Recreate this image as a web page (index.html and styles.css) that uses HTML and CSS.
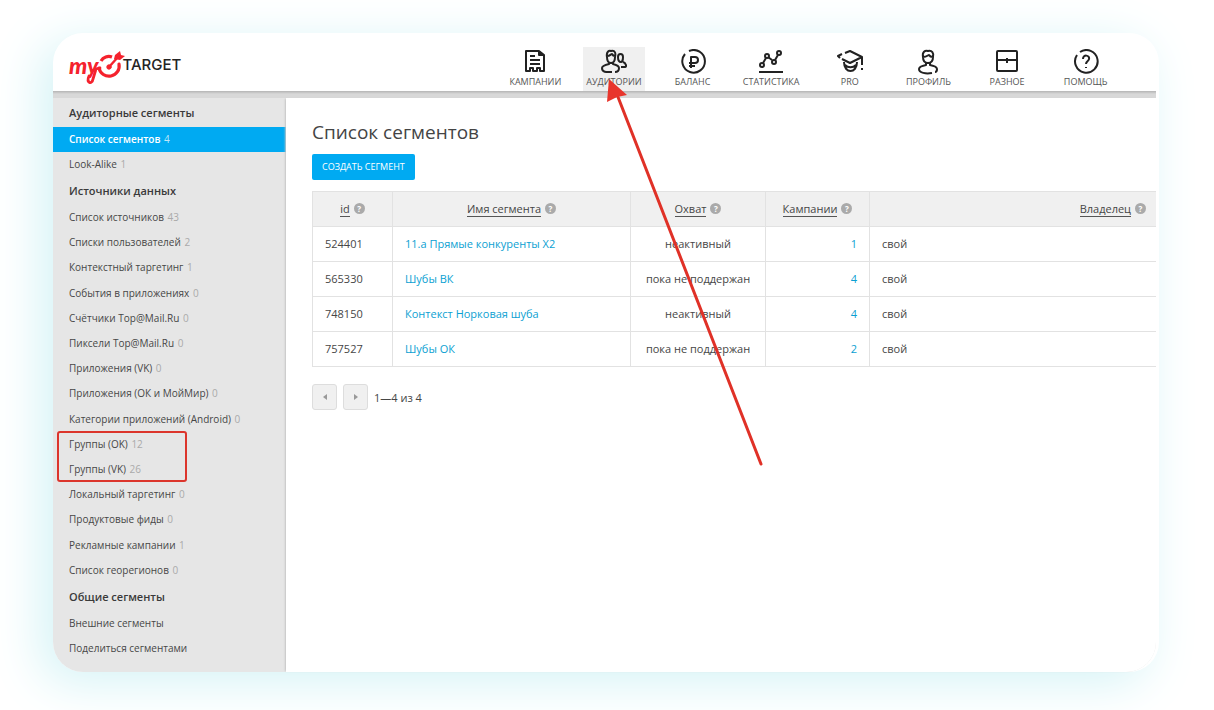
FILE: index.html
```html
<!DOCTYPE html>
<html lang="ru">
<head>
<meta charset="utf-8">
<title>myTarget — Список сегментов</title>
<meta name="viewport" content="width=device-width, initial-scale=1">
<link rel="stylesheet" href="styles.css">
</head>
<body>
<div class="card">
  <header class="topbar">
    <a class="logo" href="#" aria-label="myTarget">
      <span class="logo-my">my</span>
      <svg class="logo-mark" viewBox="0 0 36 36" fill="none" stroke="#f5222d" stroke-linecap="round">
        <path d="M-1 29C-4 36 2 38 3 32L6 22L10 21" stroke-width="2.800"/>
        <path d="M22 10A9 9 0 0 0 11 14" stroke-width="3.200" stroke-linecap="butt"/>
        <path d="M9 21A10 10 0 1 0 29 17" stroke-width="3.200"/>
        <path d="M19 20L28 10" stroke-width="2.400"/>
        <circle cx="19" cy="20" r="2.200" fill="#f5222d" stroke-width="1"/>
        <path d="M24 12L25 8L30 4L31 8L35 9L30 13Z" fill="#f5222d" stroke="none"/>
      </svg>
      <span class="logo-target">TARGET</span>
    </a>
    <nav class="nav" aria-label="Главное меню">
      <a class="nav-item" href="#"><svg viewBox="0 0 26 26"><path d="M4 22V2H17L22 6V22H18V19H15V22H11V19H8V22Z M17 2V6H22 M8 7H13 M8 11H18 M8 15H18"/></svg>КАМПАНИИ</a>
      <a class="nav-item nav-item-active" href="#" aria-current="page"><svg viewBox="0 0 26 26"><path d="M6 8C5 3 8 1 10 2C14 1 15 4 14 8C14 12 12 14 10 14C8 14 6 12 6 8Z M6 7C9 7 10 5 11 5C12 7 13 7 14 7 M8 13V15C4 16 1 17 1 19C1 24 7 23 11 23 M12 13V15C16 16 18 17 18 19C18 22 16 23 14 23 M17 8C17 4 22 4 22 8C22 11 21 13 20 13C18 13 17 11 17 8Z M22 13C25 14 26 18 24 18H20"/></svg>АУДИТОРИИ</a>
      <a class="nav-item" href="#"><svg viewBox="0 0 26 26"><path d="M5 5A11.300 11.300 0 1 0 9 2M11 19V8H15C19 8 19 14 15 14H9 M9 17H15"/></svg>БАЛАНС</a>
      <a class="nav-item" href="#"><svg viewBox="0 0 26 26"><path d="M5 14L8 9 M10 8L14 11 M17 11L20 6 M1 23H25"/><circle cx="4" cy="16" r="2"/><circle cx="9" cy="7" r="2"/><circle cx="16" cy="13" r="2"/><circle cx="21" cy="4" r="2"/></svg>СТАТИСТИКА</a>
      <a class="nav-item" href="#"><svg viewBox="0 0 26 26"><path d="M5 10L13 14L25 8L13 2L8 4 M5 5L1 7L3 9 M25 8V16 M25 19V21 M7 13C7 25 20 25 20 13 M8 16C11 19 16 19 19 16"/></svg>PRO</a>
      <a class="nav-item" href="#"><svg viewBox="0 0 26 26"><path d="M8 8C7 3 10 1 13 2C17 1 19 4 18 8C18 12 16 14 13 14C10 14 8 12 8 8Z M8 8C12 8 13 6 14 6C15 8 17 8 18 8 M11 14V16C6 17 4 18 4 20C4 24 11 25 17 24 M15 14V16C20 17 22 18 22 20C22 22 21 23 20 23"/></svg>ПРОФИЛЬ</a>
      <a class="nav-item" href="#"><svg viewBox="0 0 26 26"><rect x="3" y="2" width="20" height="20" rx="1"/><path d="M3 11H23 M13 9V14"/></svg>РАЗНОЕ</a>
      <a class="nav-item" href="#"><svg viewBox="0 0 26 26"><path d="M4 6A11.300 11.300 0 1 0 7 3M10 10C10 5 17 6 16 10C16 12 13 12 13 15 M13 18V19"/></svg>ПОМОЩЬ</a>
    </nav>
  </header>
  <div class="body">
    <aside class="sidebar">
      <h2 class="side-title">Аудиторные сегменты</h2>
      <ul class="side-list">
        <li><a class="side-link side-link-active" href="#">Список сегментов <span class="count">4</span></a></li>
        <li><a class="side-link" href="#">Look-Alike <span class="count">1</span></a></li>
      </ul>
      <h2 class="side-title">Источники данных</h2>
      <ul class="side-list side-list-sources">
        <li><a class="side-link" href="#">Список источников <span class="count">43</span></a></li>
        <li><a class="side-link" href="#">Списки пользователей <span class="count">2</span></a></li>
        <li><a class="side-link" href="#">Контекстный таргетинг <span class="count">1</span></a></li>
        <li><a class="side-link" href="#">События в приложениях <span class="count">0</span></a></li>
        <li><a class="side-link" href="#">Счётчики Top@Mail.Ru <span class="count">0</span></a></li>
        <li><a class="side-link" href="#">Пиксели Top@Mail.Ru <span class="count">0</span></a></li>
        <li><a class="side-link" href="#">Приложения (VK) <span class="count">0</span></a></li>
        <li><a class="side-link" href="#">Приложения (ОК и МойМир) <span class="count">0</span></a></li>
        <li><a class="side-link" href="#">Категории приложений (Android) <span class="count">0</span></a></li>
        <li class="marked"><a class="side-link" href="#">Группы (OK) <span class="count">12</span></a></li>
        <li><a class="side-link" href="#">Группы (VK) <span class="count">26</span></a></li>
        <li><a class="side-link" href="#">Локальный таргетинг <span class="count">0</span></a></li>
        <li><a class="side-link" href="#">Продуктовые фиды <span class="count">0</span></a></li>
        <li><a class="side-link" href="#">Рекламные кампании <span class="count">1</span></a></li>
        <li><a class="side-link" href="#">Список георегионов <span class="count">0</span></a></li>
      </ul>
      <h2 class="side-title">Общие сегменты</h2>
      <ul class="side-list">
        <li><a class="side-link" href="#">Внешние сегменты</a></li>
        <li><a class="side-link" href="#">Поделиться сегментами</a></li>
      </ul>
    </aside>
    <main class="content">
      <h1 class="title">Список сегментов</h1>
      <button class="create" type="button">СОЗДАТЬ СЕГМЕНТ</button>
      <table class="segments">
        <colgroup><col class="col-id"><col class="col-name"><col class="col-reach"><col class="col-camp"><col></colgroup>
        <thead>
          <tr>
            <th><span class="sort">id</span><span class="help">?</span></th>
            <th><span class="sort">Имя сегмента</span><span class="help">?</span></th>
            <th><span class="sort">Охват</span><span class="help">?</span></th>
            <th><span class="sort">Кампании</span><span class="help">?</span></th>
            <th class="owner"><span class="sort">Владелец</span><span class="help">?</span></th>
          </tr>
        </thead>
        <tbody>
          <tr><td>524401</td><td><a href="#">11.а Прямые конкуренты Х2</a></td><td class="reach">неактивный</td><td class="num"><a href="#">1</a></td><td>свой</td></tr>
          <tr><td>565330</td><td><a href="#">Шубы ВК</a></td><td class="reach">пока не поддержан</td><td class="num"><a href="#">4</a></td><td>свой</td></tr>
          <tr><td>748150</td><td><a href="#">Контекст Норковая шуба</a></td><td class="reach">неактивный</td><td class="num"><a href="#">4</a></td><td>свой</td></tr>
          <tr><td>757527</td><td><a href="#">Шубы ОК</a></td><td class="reach">пока не поддержан</td><td class="num"><a href="#">2</a></td><td>свой</td></tr>
        </tbody>
      </table>
      <div class="pager">
        <button class="page-btn" type="button" aria-label="Назад"><svg viewBox="0 0 4 6"><path d="M4 0V6L0 3Z"/></svg></button>
        <button class="page-btn" type="button" aria-label="Вперёд"><svg viewBox="0 0 4 6"><path d="M0 0V6L4 3Z"/></svg></button>
        <span>1—4 из 4</span>
      </div>
    </main>
  </div>
  <svg class="arrow" viewBox="0 0 160 390" aria-hidden="true"><path d="M12 18L155 385" stroke="#e03127" stroke-width="3" stroke-linecap="round"/><path d="M3 0L21 16L11 18L1 23Z" fill="#e8352c"/></svg>
</div>
</body>
</html>
```
FILE: styles.css
```css
*, *::after { box-sizing: border-box; }
body {
  margin: 0;
  min-height: 100vh;
  padding: 33px 55px 38px 53px;
  background: #fff;
  color: #464646;
  font-family: "Open Sans", "Noto Sans", sans-serif;
  font-size: 11px;
  display: flex;
}
a { color: inherit; text-decoration: none; }
.card {
  position: relative;
  flex: 1;
  min-width: 0;
  display: flex;
  flex-direction: column;
  border-radius: 30px;
  background: #fff;
  box-shadow: -12px 10px 50px #d4f3f6;
}
.topbar {
  display: flex;
  justify-content: space-between;
  height: 58px;
  padding: 14px 34px 0 16px;
}
.logo { display: flex; align-items: center; height: 36px; }
.logo-my {
  color: #f5222d;
  font: italic 900 23px/30px Lato, sans-serif;
}
.logo-mark { width: 36px; height: 36px; margin: 0 -4px 0 -8px; overflow: visible; }
.logo-target { color: #242424; font: 500 15px/20px Inter, sans-serif; }
.nav { display: grid; grid-template-columns: repeat(8, 1fr); width: 629px; }
.nav-item {
  display: flex;
  flex-direction: column;
  align-items: center;
  margin: 0 8px;
  padding-top: 2px;
  color: #555;
  font-size: 9px;
  line-height: 14px;
}
.nav-item svg {
  width: 26px;
  height: 26px;
  fill: none;
  stroke: #222;
  stroke-width: 2;
  stroke-linejoin: round;
}
.nav-item-active { background: #f0f0f0; }
.body {
  flex: 1;
  display: flex;
  margin-right: 3px;
  padding-top: 7px;
  border-radius: 0 0 30px 30px;
  background: linear-gradient(#b4b4b4, #d8d8d8 3px, #d8d8d8 7px, #e6e6e6 7px);
}
.sidebar { width: 233px; padding: 1px 0 8px; }
.side-title {
  margin: 0;
  padding: 0 0 1px 16px;
  color: #3a3a3a;
  font-size: 11px;
  font-weight: 600;
  line-height: 27px;
}
.side-list { list-style: none; margin: 0; padding: 0; }
.side-list-sources { display: grid; grid-auto-rows: 1fr; min-height: 378px; }
.side-link { display: block; padding-left: 16px; font-size: 10px; line-height: 25px; }
.side-link-active { background: #00aaf2; color: #fff; font-weight: 600; }
.count { margin-left: 1px; color: #aaa; font-weight: 400; }
.side-link-active .count { color: #bfe6f8; }
.marked { position: relative; }
.marked::after {
  content: "";
  position: absolute;
  left: 4px;
  top: -1px;
  width: 130px;
  height: 51px;
  border: 2px solid #dc352c;
  border-radius: 3px;
  pointer-events: none;
}
.content {
  flex: 1;
  min-width: 0;
  padding: 20px 0 20px 26px;
  border-radius: 0 0 30px 0;
  background: #fff;
  box-shadow: -2px 0 2px -1px #c4c4c4;
}
.title { margin: 0; color: #444; font-size: 19px; font-weight: 400; line-height: 28px; }
.create {
  display: block;
  height: 26px;
  margin: 8px 0 11px;
  padding: 0 10px;
  border: 0;
  border-radius: 2px;
  background: #00aaf2;
  color: #fff;
  font: 500 9px/26px "Open Sans", sans-serif;
}
.segments {
  width: 100%;
  table-layout: fixed;
  border-collapse: collapse;
}
.col-id { width: 80px; }
.col-name { width: 238px; }
.col-reach { width: 135px; }
.col-camp { width: 104px; }
.segments th, .segments td {
  height: 35px;
  padding: 0 12px 2px;
  border: 1px solid #e2e2e2;
  border-right: 0;
  text-align: left;
  white-space: nowrap;
}
.segments th { background: #f0f0f0; font-weight: 400; text-align: center; }
.segments th.owner { text-align: right; padding-right: 10px; }
.segments .reach { padding: 0 0 2px; text-align: center; }
.segments .num { text-align: right; }
.segments a { color: #0b9fd2; font-weight: 500; }
.sort { border-bottom: 1px solid #555; }
.help {
  display: inline-block;
  width: 11px;
  height: 11px;
  margin-left: 4px;
  border-radius: 50%;
  background: #aaa;
  color: #fff;
  font-size: 8px;
  font-weight: 700;
  line-height: 11px;
  text-align: center;
  vertical-align: 1px;
}
.pager { display: flex; align-items: center; gap: 6px; margin-top: 17px; }
.page-btn {
  display: grid;
  place-items: center;
  width: 25px;
  height: 26px;
  padding: 0;
  border: 1px solid #ddd;
  border-radius: 3px;
  background: #f0f0f0;
}
.page-btn svg { width: 4px; height: 6px; fill: #999; }
.arrow {
  position: absolute;
  left: 553px;
  top: 46px;
  width: 160px;
  height: 390px;
  fill: none;
  pointer-events: none;
}
```
